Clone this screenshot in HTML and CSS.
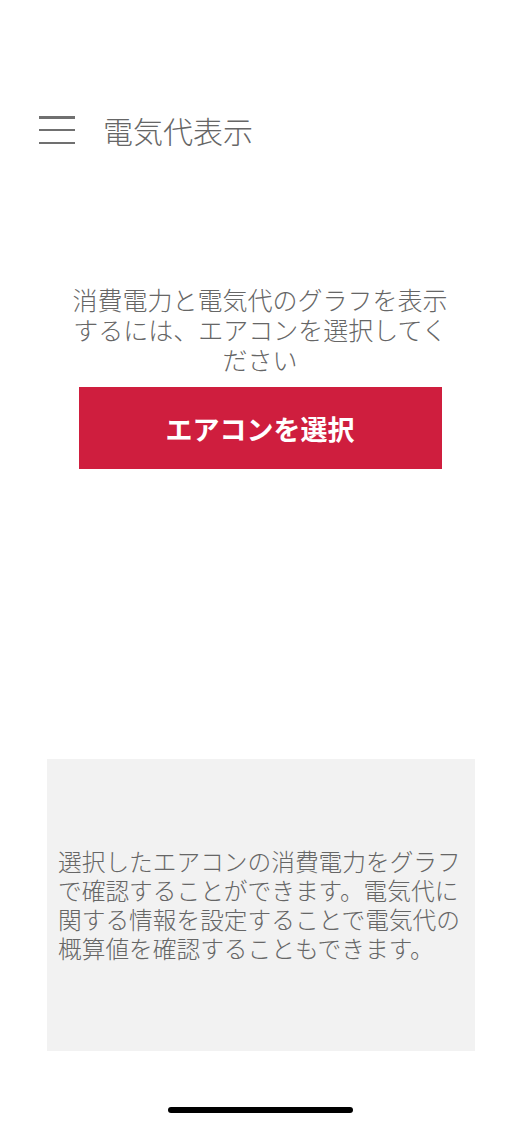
FILE: index.html
```html
<!DOCTYPE html>
<html lang="ja">
<head>
  <meta charset="UTF-8">
  <meta name="viewport" content="width=device-width, initial-scale=1.0">
  <title>電気代表示</title>
  <link rel="stylesheet" href="styles.css">
</head>
<body>
  <div class="screen">
    <header class="header">
      <button class="menuBtn" aria-label="メニュー">
        <span></span><span></span><span></span>
      </button>
      <h1 class="title">電気代表示</h1>
    </header>

    <section class="selectArea">
      <p class="message">消費電力と電気代のグラフを表示するには、エアコンを選択してください</p>
      <button class="selectBtn">エアコンを選択</button>
    </section>

    <div class="infoBox">
      <p>選択したエアコンの消費電力をグラフで確認することができます。電気代に関する情報を設定することで電気代の概算値を確認することもできます。</p>
    </div>

    <div class="homeBar"></div>
  </div>
</body>
</html>
```

FILE: styles.css
```css
body {
  margin: 0;
  padding: 0;
  background-color: #fff;
  font-family: "Noto Sans CJK JP", "Noto Sans", sans-serif;
  color: #666;
}

.screen {
  width: 520px;
  height: 1126px;
  display: flex;
  flex-direction: column;
  box-sizing: border-box;
}

.header {
  display: flex;
  align-items: center;
  height: 60px;
  margin-top: 100px;
  padding-left: 39px;
}

.menuBtn {
  display: flex;
  flex-direction: column;
  justify-content: space-between;
  width: 36px;
  height: 28px;
  padding: 0;
  border: none;
  background: none;
}

.menuBtn span {
  display: block;
  height: 2.5px;
  background-color: #707070;
}

.title {
  margin: 0 0 0 28px;
  font-size: 30px;
  font-weight: 300;
  color: #666;
  line-height: 1;
}

.selectArea {
  display: flex;
  flex-direction: column;
  align-items: center;
  margin-top: 124px;
}

.message {
  width: 390px;
  margin: 0;
  font-size: 25px;
  font-weight: 300;
  line-height: 30px;
  text-align: center;
}

.selectBtn {
  width: 363px;
  height: 82px;
  margin-top: 13px;
  border: none;
  background-color: #cf1e3e;
  color: #fff;
  font-family: inherit;
  font-size: 27px;
  font-weight: bold;
  cursor: pointer;
}

.infoBox {
  display: flex;
  align-items: center;
  width: 428px;
  height: 292px;
  margin: 290px 0 0 47px;
  padding: 0 10px 0 11px;
  box-sizing: border-box;
  background-color: #f2f2f2;
}

.infoBox p {
  margin: 0;
  font-size: 23.7px;
  font-weight: 300;
  line-height: 29px;
}

.homeBar {
  width: 185px;
  height: 6px;
  margin: 56px 0 0 168px;
  border-radius: 3px;
  background-color: #000;
}
```
